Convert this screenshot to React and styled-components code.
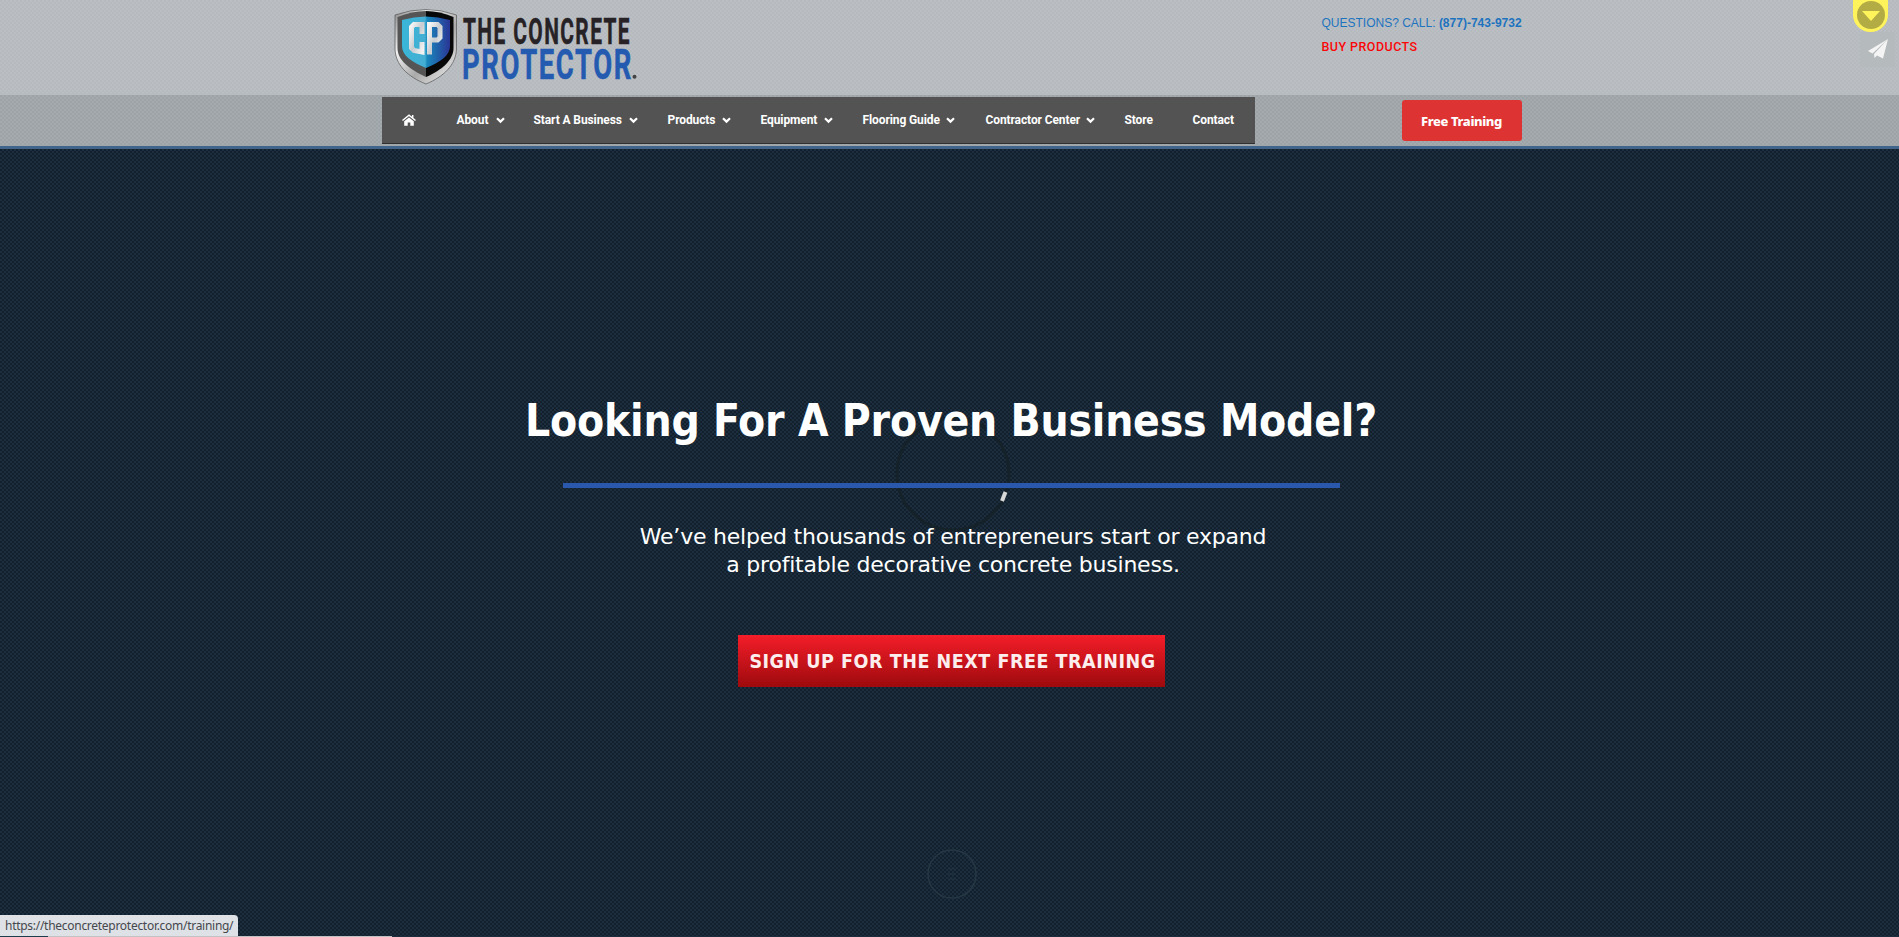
import React from "react";
import styled, { createGlobalStyle } from "styled-components";

const GlobalStyle = createGlobalStyle`
  * { box-sizing: border-box; }
  body { margin: 0; overflow: hidden; background: #172634; }
`;

const Page = styled.div`
  position: relative;
  display: flex;
  flex-direction: column;
  width: 100%;
  height: 937px;
  overflow: hidden;
  font-family: Roboto, "Liberation Sans", sans-serif;
`;

const Header = styled.header`
  border-bottom: 3px solid #41658a;
  flex: none;
`;

const weave = (a, b) => `
  background: repeating-conic-gradient(${a} 0 25%, ${b} 0 50%) 0 0 / 4px 4px;
`;

const TopBar = styled.div`
  height: 95px;
  ${weave("#bbbfc4", "#b5babf")}
`;

const NavBar = styled.div`
  height: 51px;
  ${weave("#a5aaae", "#9da4a8")}
`;

const Container = styled.div`
  width: 1140px;
  height: 100%;
  margin: 0 auto;
  position: relative;
  left: 2px;
  display: flex;
  justify-content: space-between;
`;

const Logo = styled.svg`
  display: block;
  margin: 5px 0 0 8px;
  overflow: visible;
`;

const ContactInfo = styled.div`
  width: 201px;
  padding: 13px 0 0 1px;
  font: 12px/20px "Liberation Sans", Arial, sans-serif;
  white-space: nowrap;
`;

const Phone = styled.div`
  color: #1e73be;
  height: 24px;
`;

const BuyLink = styled.a`
  display: block;
  color: #fa0808;
  font-family: Roboto, sans-serif;
  font-weight: 500;
  font-size: 12.5px;
  letter-spacing: 0.45px;
`;

const Menu = styled.nav`
  width: 873px;
  height: 47px;
  margin-top: 2px;
  display: flex;
  align-items: center;
  background: #535353;
  border-bottom: 1px solid #303030;
`;

const HomeItem = styled.a`
  display: flex;
  width: 56px;
  padding-left: 20px;
`;

const MenuItem = styled.a`
  display: flex;
  align-items: center;
  justify-content: space-between;
  flex: none;
  width: ${(p) => p.$w}px;
  margin-left: ${(p) => p.$gap}px;
  color: #fff;
  font-size: 12px;
  font-weight: 700;
  letter-spacing: -0.1px;
  white-space: nowrap;
`;

const TrainingButton = styled.a`
  width: 120px;
  height: 41px;
  margin-top: 5px;
  border-radius: 3px;
  background: #dd3333;
  color: #fff;
  font: 800 13px/43px "Noto Sans", "Open Sans", sans-serif;
  letter-spacing: -0.4px;
  text-align: center;
`;

const Hero = styled.main`
  position: relative;
  flex: 1;
  display: flex;
  flex-direction: column;
  align-items: center;
  padding-left: 3px;
  ${weave("#1d2f3e", "#121f2c")}
  color: #fff;
  font-family: "DejaVu Sans Condensed", "DejaVu Sans", sans-serif;
  font-stretch: condensed;
`;

const Title = styled.h1`
  margin: 242px 0 0;
  height: 60px;
  font-size: 44px;
  line-height: 60px;
  font-weight: 700;
  letter-spacing: -0.23px;
  white-space: nowrap;
  z-index: 1;
`;

const Rule = styled.div`
  width: 777px;
  height: 5px;
  margin-top: 32px;
  background: #2a58ac;
  z-index: 1;
`;

const Lead = styled.p`
  margin: 35px 0 0;
  padding-left: 4px;
  font-family: "DejaVu Sans", sans-serif;
  font-stretch: normal;
  font-size: 22px;
  line-height: 27.5px;
  letter-spacing: -0.22px;
  text-align: center;
  white-space: nowrap;
  z-index: 1;
`;

const SignUp = styled.a`
  width: 427px;
  height: 52px;
  margin-top: 57px;
  padding-left: 3px;
  background: linear-gradient(#f41d29, #9d0a0d);
  color: #fdeeee;
  font-size: 19.5px;
  line-height: 54px;
  font-weight: 700;
  letter-spacing: 0.52px;
  text-align: center;
  white-space: nowrap;
  z-index: 1;
`;

const Spinner = styled.svg`
  position: absolute;
  left: 893px;
  top: 266px;
`;

const ScrollHint = styled.svg`
  position: absolute;
  left: 926px;
  top: 699px;
`;

const CornerTools = styled.svg`
  position: absolute;
  right: 0;
  top: 0;
`;

const StatusLink = styled.div`
  position: absolute;
  left: 0;
  bottom: 1px;
  width: 238px;
  height: 21px;
  padding-left: 5px;
  border-top-right-radius: 4px;
  background: #dee1e6;
  color: #45484c;
  font: 12px/22px "Noto Sans", "Open Sans", sans-serif;
  letter-spacing: -0.28px;
  white-space: nowrap;
`;

const BottomEdge = styled.div`
  position: absolute;
  left: 0;
  bottom: 0;
  width: 100%;
  height: 1px;
  background: linear-gradient(90deg, #1c3d4c 0 48px, #c2c2c4 48px 392px, #1c2e3e 392px);
`;

const Chevron = () => (
  <svg width="9" height="7" viewBox="0 0 9 7">
    <path d="M1 1.200 L4.500 4.600 L8 1.200" fill="none" stroke="#fff" strokeWidth="2.200" />
  </svg>
);

const items = [
  { label: "About", gap: 19, w: 48, sub: true },
  { label: "Start A Business", gap: 29, w: 104, sub: true },
  { label: "Products", gap: 30, w: 63, sub: true },
  { label: "Equipment", gap: 30, w: 72, sub: true },
  { label: "Flooring Guide", gap: 30, w: 92, sub: true },
  { label: "Contractor Center", gap: 31, w: 109, sub: true },
  { label: "Store", gap: 30, w: 29 },
  { label: "Contact", gap: 39, w: 43 },
];

const BrandLogo = () => (
  <Logo width="260" height="84" viewBox="390 5 260 84">
    <defs>
      <linearGradient id="rim" x1="0" y1="0" x2="1" y2="1">
        <stop offset="0" stopColor="#888" />
        <stop offset="0.3" stopColor="#f2f2f2" />
        <stop offset="0.6" stopColor="#aaa" />
        <stop offset="1" stopColor="#f5f5f5" />
      </linearGradient>
      <linearGradient id="core" x1="0" y1="0" x2="1" y2="0">
        <stop offset="0" stopColor="#39b6d8" />
        <stop offset="0.48" stopColor="#45aed2" />
        <stop offset="0.52" stopColor="#1989bd" />
        <stop offset="1" stopColor="#2a3595" />
      </linearGradient>
      <linearGradient id="letters" x1="0" y1="0" x2="1" y2="1">
        <stop offset="0" stopColor="#f5f5f5" />
        <stop offset="0.5" stopColor="#c8ccd0" />
        <stop offset="1" stopColor="#f2f2f2" />
      </linearGradient>
    </defs>
    <path d="M395 15 Q426 4 456.500 15 V48 C456.500 65 443 77 426 84 C408 77 395 65 395 48 Z" fill="url(#rim)" stroke="#555" strokeWidth="0.7" />
    <path d="M397.500 17 Q412 11 426 11 V77 C409 69 397.500 60 397.500 48 Z" fill="#555" />
    <path d="M426 11 Q440 11 453.500 17 V48 C453.500 60 442 70 426 77 Z" fill="#080808" />
    <path d="M402 20 Q426 13 450 20 V46 C450 56 440 62 426 68 C412 62 402 56 402 46 Z" fill="url(#core)" />
    <path d="M422 34 V24.500 H414 L411.500 27 V48 L414 50.500 L422 52 V42" fill="none" stroke="url(#letters)" strokeWidth="5" />
    <path d="M429.500 54.500 V24.500 H437.500 L440 27 V37.500 L437.500 40 H430" fill="none" stroke="url(#letters)" strokeWidth="5" />
    <text x="463" y="44" textLength="168" lengthAdjust="spacingAndGlyphs" letterSpacing="2.500" fontFamily="Roboto, sans-serif" fontWeight="700" fontSize="37" fill="#272225" stroke="#272225" strokeWidth="0.5">THE CONCRETE</text>
    <text x="462" y="79" textLength="171" lengthAdjust="spacingAndGlyphs" letterSpacing="2.500" fontFamily="Roboto, sans-serif" fontWeight="700" fontSize="43" fill="#245bb0" stroke="#245bb0" strokeWidth="0.5">PROTECTOR</text>
    <circle cx="634.500" cy="76.800" r="2" fill="#444" />
  </Logo>
);

export default function App() {
  return (
    <Page>
      <GlobalStyle />
      <Header>
        <TopBar>
          <Container>
            <BrandLogo />
            <ContactInfo>
              <Phone>QUESTIONS? CALL: <b>(877)-743-9732</b></Phone>
              <BuyLink>BUY PRODUCTS</BuyLink>
            </ContactInfo>
          </Container>
        </TopBar>
        <NavBar>
          <Container>
            <Menu>
              <HomeItem>
                <svg width="14" height="12" viewBox="0 0 14 12">
                  <path d="M0.500 6.500 L7 1.200 L13.500 6.500 M10.700 1 V4" fill="none" stroke="#fff" strokeWidth="1.500" />
                  <path d="M2.200 7.300 L7 3.400 L11.800 7.300 V11.800 H8.300 V8.400 H5.700 V11.800 H2.200 Z" fill="#fff" />
                </svg>
              </HomeItem>
              {items.map((i) => (
                <MenuItem key={i.label} $w={i.w} $gap={i.gap}>
                  {i.label}
                  {i.sub && <Chevron />}
                </MenuItem>
              ))}
            </Menu>
            <TrainingButton>Free Training</TrainingButton>
          </Container>
        </NavBar>
      </Header>
      <Hero>
        <Title>Looking For A Proven Business Model?</Title>
        <Rule />
        <Lead>
          We’ve helped thousands of entrepreneurs start or expand
          <br />a profitable decorative concrete business.
        </Lead>
        <SignUp>SIGN UP FOR THE NEXT FREE TRAINING</SignUp>
        <Spinner width="120" height="120" viewBox="0 0 120 120">
          <circle cx="60" cy="59" r="56" fill="none" stroke="#15222a" strokeWidth="3" />
          <path d="M112.500 77 L109 86" stroke="#d8d8d8" strokeWidth="4" />
        </Spinner>
        <ScrollHint width="52" height="52" viewBox="0 0 52 52">
          <circle cx="26" cy="26" r="24" fill="none" stroke="#263744" strokeWidth="1.500" />
          <path d="M22 21 H30 M22 26 H30 M22 31 H30" stroke="#223441" strokeWidth="1" />
        </ScrollHint>
      </Hero>
      <CornerTools width="50" height="70" viewBox="1849 0 50 70">
        <rect x="1860" y="32" width="35" height="35" fill="#b5babc" />
        <path d="M1853 0 H1888 V15 A17.500 17 0 0 1 1853 15 Z" fill="#fff35c" />
        <circle cx="1871" cy="15" r="14" fill="#b3ac45" />
        <path d="M1862 11 H1880 L1871 21 Z" fill="#fff35c" />
        <path d="M1888 39 L1868 51 L1872.500 53.500 Z M1888 39 L1874 54 L1874.500 58 L1877 55.500 L1883 58.500 Z" fill="#f4f4f4" />
      </CornerTools>
      <StatusLink>https://theconcreteprotector.com/training/</StatusLink>
      <BottomEdge />
    </Page>
  );
}
